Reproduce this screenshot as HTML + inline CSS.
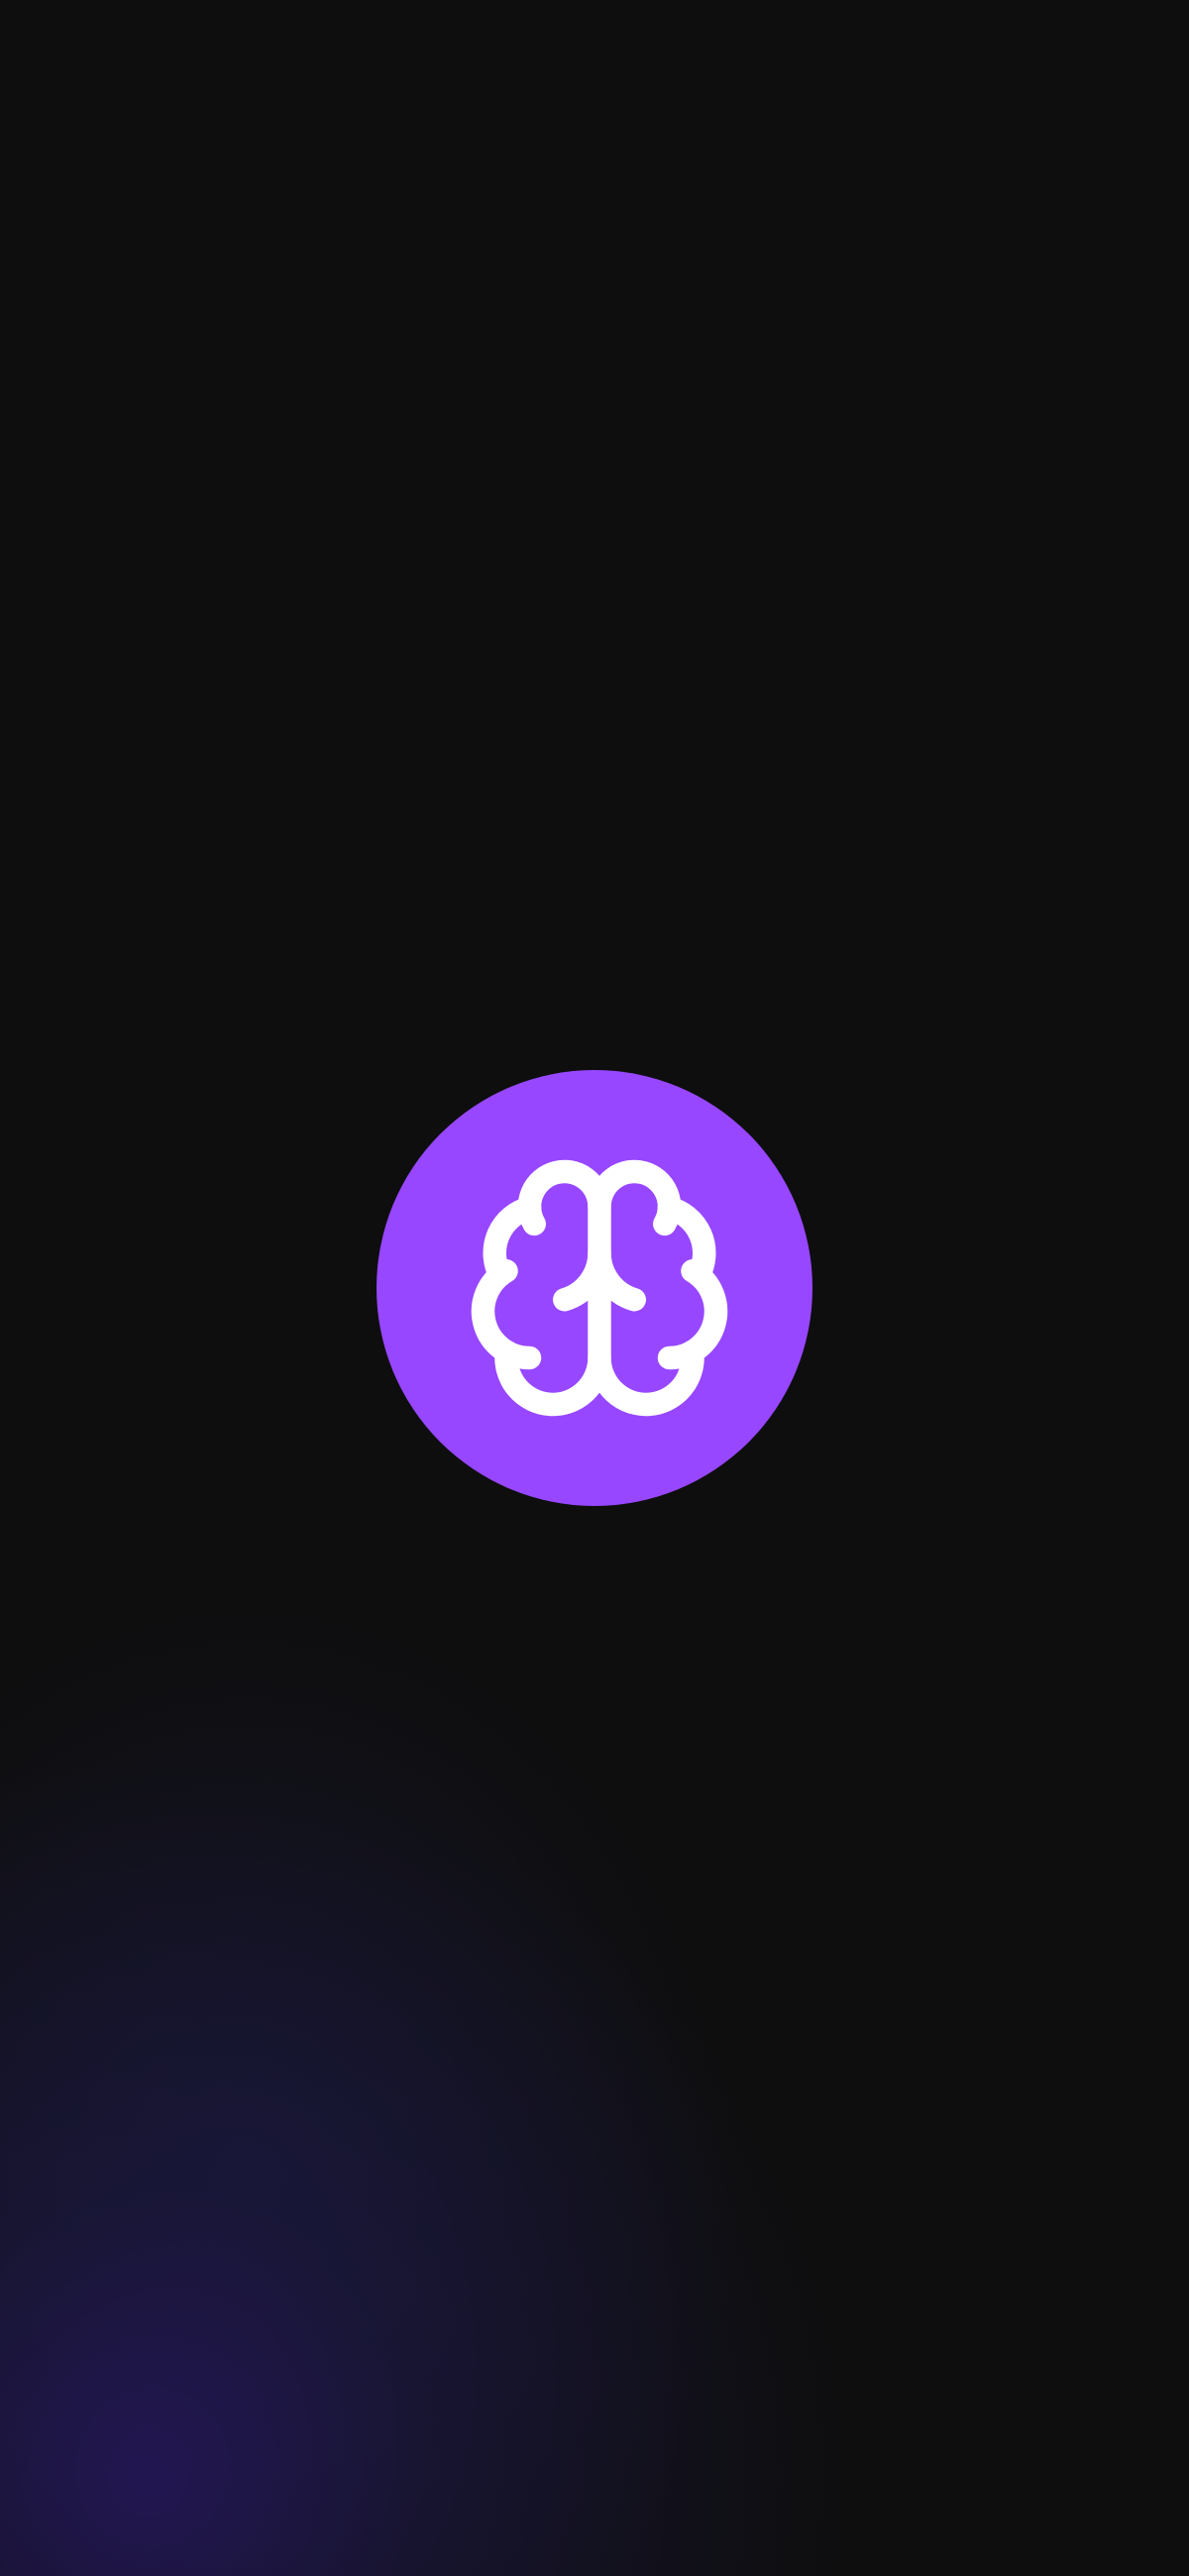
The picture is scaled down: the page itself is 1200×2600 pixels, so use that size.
<!DOCTYPE html>
<html><head><meta charset="utf-8"><style>
html,body{margin:0;padding:0}
body{width:1200px;height:2600px;background:#0e0e0e;position:relative;overflow:hidden;
background-image:radial-gradient(ellipse 720px 720px at 150px 2500px, rgba(40,24,100,0.75) 0%, rgba(30,25,75,0.45) 40%, rgba(14,14,14,0) 100%),
radial-gradient(ellipse 500px 600px at 250px 2200px, rgba(28,28,70,0.5) 0%, rgba(14,14,14,0) 100%);}
.c{position:absolute;left:380px;top:1080px;width:440px;height:440px;border-radius:50%;background:#9747ff;}
svg{position:absolute;left:464px;top:1159px}
</style></head><body>
<div class="c"></div>
<svg width="282" height="282" viewBox="0 0 24 24" fill="none" stroke="#fff" stroke-width="2" stroke-linecap="round" stroke-linejoin="round">
<path d="M12 18V5"/>
<path d="M15 13a4.17 4.17 0 0 1-3-4 4.17 4.17 0 0 1-3 4"/>
<path d="M17.598 6.5A3 3 0 1 0 12 5a3 3 0 1 0-5.598 1.5"/>
<path d="M17.997 5.125a4 4 0 0 1 2.526 5.77"/>
<path d="M18 18a4 4 0 0 0 2-7.464"/>
<path d="M19.967 17.483A4 4 0 1 1 12 18a4 4 0 1 1-7.967-.517"/>
<path d="M6 18a4 4 0 0 1-2-7.464"/>
<path d="M6.003 5.125a4 4 0 0 0-2.526 5.77"/>
</svg>
</body></html>
